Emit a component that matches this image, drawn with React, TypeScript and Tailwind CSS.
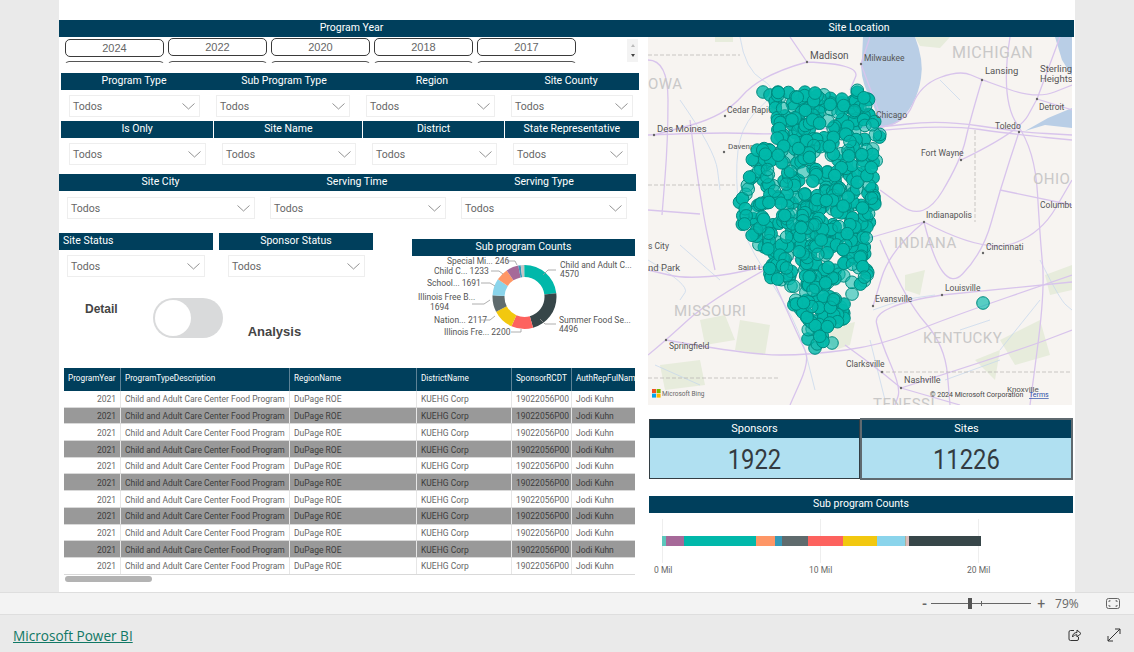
const FONT = "font-['Roboto','Liberation_Sans',sans-serif]";

function mulberry(seed: number) {
  return () => {
    seed = (seed + 0x6d2b79f5) | 0;
    let t = Math.imul(seed ^ (seed >>> 15), 1 | seed);
    t = (t + Math.imul(t ^ (t >>> 7), 61 | t)) ^ t;
    return ((t ^ (t >>> 14)) >>> 0) / 4294967296;
  };
}

const ILLINOIS: [number, number][] = [
  [764, 92], [870, 90], [872, 110], [880, 130], [880, 165], [875, 190], [875, 215], [868, 230],
  [865, 258], [869, 272], [866, 284], [855, 288], [850, 302], [847, 317], [835, 323], [832, 335],
  [815, 348], [808, 338], [808, 320], [792, 308], [773, 283], [763, 260], [752, 238], [735, 215],
  [737, 195], [748, 175], [755, 150], [768, 135], [776, 125], [775, 105],
];
const HOLES: [number, number, number][] = [
  [822, 131, 7], [840, 145, 7], [778, 171, 9], [757, 192, 9], [835, 258, 8], [852, 272, 7],
  [840, 288, 10], [785, 292, 7], [770, 212, 8], [742, 172, 8], [795, 262, 6], [858, 150, 5],
];

function inside(x: number, y: number) {
  let hit = false;
  for (let i = 0, j = ILLINOIS.length - 1; i < ILLINOIS.length; j = i++) {
    const [xi, yi] = ILLINOIS[i];
    const [xj, yj] = ILLINOIS[j];
    if (yi > y !== yj > y && x < ((xj - xi) * (y - yi)) / (yj - yi) + xi) hit = !hit;
  }
  return hit && !HOLES.some(([hx, hy, r]) => Math.hypot(x - hx, y - hy) < r);
}

function buildDots() {
  const rand = mulberry(42);
  const dots: { x: number; y: number; o: number }[] = [
    { x: 763, y: 92, o: 0.8 },
    { x: 770, y: 95, o: 0.9 },
    { x: 780, y: 97, o: 0.5 },
    { x: 815, y: 348, o: 0.8 },
    { x: 832, y: 343, o: 0.6 },
    { x: 808, y: 339, o: 0.9 },
    { x: 983, y: 303, o: 0.65 },
  ];
  while (dots.length < 640) {
    const x = 733 + rand() * 150;
    const y = 90 + rand() * 260;
    if (inside(x, y)) dots.push({ x, y, o: rand() < 0.3 ? 0.55 : 0.95 });
  }
  return dots;
}

// polylines rounded off so the roads read as curves
function smooth(d: string) {
  return d
    .split("M")
    .filter((s) => s.trim())
    .map((part) => {
      const pts = part.trim().split("L").map((p) => p.trim().split(" ").map(Number));
      let out = `M${pts[0][0]} ${pts[0][1]}`;
      for (let i = 1; i < pts.length - 1; i++) {
        const mx = (pts[i][0] + pts[i + 1][0]) / 2;
        const my = (pts[i][1] + pts[i + 1][1]) / 2;
        out += ` Q${pts[i][0]} ${pts[i][1]} ${mx} ${my}`;
      }
      const last = pts[pts.length - 1];
      return `${out} L${last[0]} ${last[1]}`;
    })
    .join(" ");
}

const ROADS = [
  "M648 135 L720 132 L780 135 L820 128 L875 128 L940 120 L1020 132 L1072 135",
  "M875 131 L940 124 L1020 135 L1072 140",
  "M807 62 L861 64 L850 90 M807 62 L790 37 M861 64 L870 37 M807 62 L760 75 L725 116 L654 135",
  "M875 128 L905 125 L920 85 L960 70 L982 80 L1037 99 L1072 85",
  "M982 80 L970 120 L961 160 L924 222 L880 190",
  "M961 160 L1019 132 L1037 99",
  "M924 222 L983 253 L1040 235 L1072 180",
  "M924 222 L942 295 L983 253 L1000 190 L1019 132",
  "M942 295 L1072 282 M942 295 L873 306 L880 340 L901 388 L895 405",
  "M924 222 L890 250 L873 306 M924 222 L768 268 L690 280 L648 270",
  "M768 268 L710 300 L666 340 L648 355 M768 268 L800 340 L810 360 L790 405",
  "M666 340 L750 355 L810 355 L882 345 L942 320 L1072 275",
  "M901 388 L882 372 L845 345 M901 388 L1020 350 L1072 330 M901 388 L960 405",
  "M861 64 L880 115 M1037 99 L1060 37 M1010 37 L1000 100 L1035 150 L1040 237 L1045 290 L1030 405",
  "M648 60 L668 60 L668 140 L662 215 M690 120 L700 200 L715 270 M648 210 L700 214",
  "M1037 99 L1072 110 M1000 190 L1072 205 M880 240 L905 300 L945 345 L950 405",
];
const RIVERS = [
  "M740 37 L745 70 L780 90 L745 120 L735 160 L740 230 L770 280 L800 330 L815 390",
  "M680 100 L715 150 L720 190 M680 245 L720 280 M873 310 L900 300 L935 295 M870 340 L885 400",
  "M960 330 L990 320 M1000 350 L1040 300 M945 380 L1000 360 M648 260 L690 285 L680 300",
  "M880 40 L900 30 M940 80 L960 100 M1040 260 L1060 300 L1072 310 M655 365 L700 385",
];
const PATCHES = [
  "M715 37 L733 37 L733 42 L715 42 Z",
  "M915 37 L950 37 L940 48 L920 46 Z",
  "M700 320 L725 315 L735 340 L705 345 Z",
  "M740 320 L770 325 L765 355 L735 350 Z",
  "M820 330 L855 322 L850 345 L835 350 Z",
  "M905 275 L925 270 L920 295 L905 290 Z",
  "M1000 340 L1040 320 L1050 355 L1015 365 Z",
  "M1045 275 L1072 265 L1072 290 L1050 295 Z",
  "M660 365 L700 360 L705 385 L665 390 Z",
  "M975 360 L1000 350 L995 380 Z",
];
const CITIES: [string, number, number, number, number, number][] = [
  ["Madison", 810, 59, 807, 62, 10],
  ["Milwaukee", 864, 61, 861, 64, 8.5],
  ["Lansing", 985, 74, 982, 80, 9.5],
  ["Cedar Rapids", 727, 113, 725, 116, 8.5],
  ["Des Moines", 657, 132, 654, 135, 9.5],
  ["Davenport", 728, 149, 724, 152, 8],
  ["Fort Wayne", 921, 156, 961, 160, 8.5],
  ["Toledo", 995, 129, 1019, 132, 8.5],
  ["Detroit", 1039, 110, 1037, 99, 8.5],
  ["Indianapolis", 926, 218, 924, 222, 8.5],
  ["Cincinnati", 986, 250, 983, 253, 8.5],
  ["Louisville", 945, 291, 942, 295, 8.5],
  ["Evansville", 875, 302, 873, 306, 8.5],
  ["Springfield", 669, 349, 666, 340, 8.5],
  ["Clarksville", 846, 367, 882, 372, 8.5],
  ["Nashville", 904, 383, 901, 388, 9],
];
const STATES: [string, number, number, number][] = [
  ["MICHIGAN", 952, 58, 16],
  ["OWA", 648, 89, 15],
  ["OHIO", 1033, 184, 15],
  ["INDIANA", 894, 248, 15],
  ["MISSOURI", 674, 316, 15],
  ["KENTUCKY", 923, 343, 15],
  ["TENESSI", 873, 409, 15],
];
const EXTRA_LABELS: [string, number, number, number][] = [
  ["Sterling", 1040, 72, 9.5],
  ["Heights", 1040, 82, 9.5],
  ["Columbus", 1040, 208, 8.5],
  ["Knoxville", 1007, 392, 8],
  ["s City", 648, 249, 8.5],
  ["nd Park", 648, 271, 9.5],
  ["Saint Louis", 738, 270, 8],
];

function SiteMap() {
  return (
    <div className="ml-[4px] h-[368px] w-[424px] overflow-hidden">
      <svg viewBox="648 37 424 368" width={424} height={368} className="block" fontFamily="Roboto, sans-serif">
        <rect x={648} y={37} width={424} height={368} fill="#f7f4f1" />
        {PATCHES.map((d) => (
          <path key={d} d={d} fill="#e7ecdc" />
        ))}
        <path d="M863 37 L915 37 Q924 60 921 78 Q917 105 898 122 Q888 128 878 127 Q878 112 868 94 Q859 75 862 58 Z" fill="#b9cee6" />
        <path d="M1055 37 L1072 37 L1072 76 L1062 60 Z" fill="#b9cee6" />
        <path d="M1025 131 L1048 118 L1072 108 L1072 128 L1045 125 Z" fill="#b9cee6" />
        {RIVERS.map((d) => (
          <path key={d} d={smooth(d)} fill="none" stroke="#c3d6ec" strokeWidth={0.7} />
        ))}
        {ROADS.map((d) => (
          <path key={d} d={smooth(d)} fill="none" stroke="#d8c4ec" strokeWidth={1.3} />
        ))}
        <path d="M648 55 L740 55 M648 185 L735 185 M975 130 L975 222 M880 372 L1072 372 M648 378 L780 378" fill="none" stroke="#b5b2b0" strokeWidth={0.7} strokeDasharray="4 2" />
        {STATES.map(([name, x, y, size]) => (
          <text key={name} x={x} y={y} fontSize={size} fill="#c9c8c8" letterSpacing={0.5}>
            {name}
          </text>
        ))}
        {CITIES.map(([name, x, y, dx, dy, size]) => (
          <g key={name}>
            <circle cx={dx} cy={dy} r={1.2} fill="#666" />
            <text x={x} y={y} fontSize={size} fill="#555">{name}</text>
          </g>
        ))}
        {EXTRA_LABELS.map(([name, x, y, size]) => (
          <text key={name} x={x} y={y} fontSize={size} fill="#555">{name}</text>
        ))}
        {buildDots().map((d, i) => (
          <circle key={i} cx={d.x} cy={d.y} r={6.3} fill="#01b8aa" fillOpacity={d.o} stroke="#008a7f" strokeWidth={1} />
        ))}
        <text x={876} y={118} fontSize={8.5} fill="#555">Chicago</text>
        <rect x={652} y={389} width={4} height={4} fill="#f25022" />
        <rect x={656.6} y={389} width={4} height={4} fill="#7fba00" />
        <rect x={652} y={393.6} width={4} height={4} fill="#00a4ef" />
        <rect x={656.6} y={393.6} width={4} height={4} fill="#ffb900" />
        <text x={662} y={396} fontSize={6.5} fill="#666">Microsoft Bing</text>
        <text x={930} y={397} fontSize={7} fill="#444">© 2024 Microsoft Corporation</text>
        <text x={1029} y={397} fontSize={7} fill="#2b4fa8" textDecoration="underline">Terms</text>
      </svg>
    </div>
  );
}

const DONUT = [
  { v: 4570, c: "#01b8aa" },
  { v: 4496, c: "#374649" },
  { v: 2200, c: "#fd625e" },
  { v: 2117, c: "#f2c80f" },
  { v: 1694, c: "#5f6b6d" },
  { v: 1691, c: "#8ad4eb" },
  { v: 1233, c: "#fe9666" },
  { v: 1233, c: "#a66999" },
  { v: 246, c: "#3599b8" },
  { v: 340, c: "#c4c4c4" },
  { v: 90, c: "#01b8aa" },
  { v: 90, c: "#f2c80f" },
];

function Donut() {
  const total = DONUT.reduce((s, d) => s + d.v, 0);
  const r = 26;
  const circ = 2 * Math.PI * r;
  let acc = 0;
  return (
    <svg viewBox="412 256 223 92" width={223} height={92} className="block">
      <g transform="rotate(-90 524.5 297)">
        {DONUT.map((d, i) => {
          const len = (d.v / total) * circ;
          const el = (
            <circle
              key={i}
              cx={524.5}
              cy={297}
              r={r}
              fill="none"
              stroke={d.c}
              strokeWidth={12}
              strokeDasharray={`${len} ${circ - len}`}
              strokeDashoffset={-acc}
            />
          );
          acc += len;
          return el;
        })}
      </g>
      <g fontFamily="Roboto, sans-serif" fontSize={8.5} fill="#555">
        <text x={560} y={268}>Child and Adult C...</text>
        <text x={560} y={277}>4570</text>
        <text x={559} y={323}>Summer Food Se...</text>
        <text x={559} y={332}>4496</text>
        <text x={444} y={335}>Illinois Fre... 2200</text>
        <text x={434} y={323}>Nation... 2117</text>
        <text x={418} y={300}>Illinois Free B...</text>
        <text x={430} y={310}>1694</text>
        <text x={427} y={286}>School... 1691</text>
        <text x={434} y={274}>Child C... 1233</text>
        <text x={447} y={264}>Special Mi... 246</text>
      </g>
      <path
        d="M511 332 L521 332 L521 329 M480 320 L490 320 L495 316 M472 304 L484 304 L490 300 M481 283 L490 283 L495 286 M491 271 L499 271 L503 274 M507 261 L515 261 L517 265 M556 270 L548 270 L543 275 M556 324 L545 324 L540 319"
        fill="none"
        stroke="#999"
        strokeWidth={0.8}
      />
    </svg>
  );
}

const BAR = [
  { w: 3.5, c: "#5cc7bc" },
  { w: 18, c: "#a66999" },
  { w: 72, c: "#01b8aa" },
  { w: 19.5, c: "#fe9666" },
  { w: 6.5, c: "#3599b8" },
  { w: 26.5, c: "#5f6b6d" },
  { w: 35, c: "#fd625e" },
  { w: 33.5, c: "#f2c80f" },
  { w: 28, c: "#8ad4eb" },
  { w: 1.5, c: "#a9b29b" },
  { w: 3, c: "#dcbcbc" },
  { w: 71.5, c: "#374649" },
];

function Title({ children, className = "" }: { children?: React.ReactNode; className?: string }) {
  return (
    <div className={`flex h-[17px] items-center justify-center overflow-hidden whitespace-nowrap bg-[#003f5c] pb-[1px] text-[10.5px] leading-none text-white ${className}`}>
      {children}
    </div>
  );
}

function Dropdown({ className = "" }: { className?: string }) {
  return (
    <div className={`flex h-[22px] items-center justify-between border border-[#eeeeee] bg-white pl-[3px] pr-[3px] text-[10.5px] text-[#666666] ${className}`}>
      <span className="mt-[1px]">Todos</span>
      <svg width={13} height={7} viewBox="0 0 13 7" className="mr-[1px]">
        <path d="M0.5 0.5 L6.5 6 L12.5 0.5" fill="none" stroke="#777" strokeWidth={0.8} />
      </svg>
    </div>
  );
}

const YEARS = ["2024", "2022", "2020", "2018", "2017"];

function YearSlicer() {
  return (
    <div className="mt-[1px] flex h-[25px] overflow-hidden pl-[6px]">
      <div className="w-[515px]">
        <div className="flex gap-[4px]">
          {YEARS.map((y, i) => (
            <div
              key={y}
              className={`flex h-[18px] w-[99px] items-center justify-center rounded-[5px] border border-[#3a3a3a] text-[11px] text-[#666666] font-['Liberation_Sans',sans-serif] ${i === 0 ? "mt-[1px]" : ""}`}
            >
              {y}
            </div>
          ))}
        </div>
        <div className="mt-[4px] flex gap-[4px]">
          {YEARS.map((y) => (
            <div key={y} className="h-[8px] w-[99px] rounded-[5px] border border-[#555555]" />
          ))}
        </div>
      </div>
      <div className="ml-[47px] mt-[1px] flex h-[23px] w-[11px] flex-col items-center justify-between bg-[#f3f3f3] py-[5px]">
        <div className="h-0 w-0 border-x-[2.5px] border-b-[3px] border-x-transparent border-b-[#bbbbbb]" />
        <div className="h-0 w-0 border-x-[2.5px] border-t-[3px] border-x-transparent border-t-[#444444]" />
      </div>
    </div>
  );
}

const COLS = ["w-[57px]", "w-[169px]", "w-[127px]", "w-[95px]", "w-[60px]", "w-[63px]"];
const HEADS = ["ProgramYear", "ProgramTypeDescription", "RegionName", "DistrictName", "SponsorRCDT", "AuthRepFulName"];
const CELLS = ["2021", "Child and Adult Care Center Food Program", "DuPage ROE", "KUEHG Corp", "19022056P00", "Jodi Kuhn"];

function DataTable() {
  return (
    <div className="ml-[5px] w-[571px] overflow-hidden">
      <div className="flex h-[23px] bg-[#003f5c] text-[8.2px] text-white">
        {HEADS.map((h, i) => (
          <div key={h} className={`${COLS[i]} flex shrink-0 items-center overflow-hidden whitespace-nowrap border-r border-[#5d8296] pb-[3px] pl-[4px] last:border-r-0`}>
            {h}
          </div>
        ))}
      </div>
      {Array.from({ length: 11 }, (_, r) => (
        <div
          key={r}
          className={`flex h-[16.7px] border-b border-[#d9d9d9] text-[8.5px] ${r % 2 ? "bg-[#999999] text-[#3c3c3c]" : "bg-white text-[#666666]"}`}
        >
          {CELLS.map((c, i) => (
            <div
              key={i}
              className={`${COLS[i]} flex shrink-0 items-center overflow-hidden whitespace-nowrap border-r border-[#e6e6e6] pl-[4px] pt-[2px] last:border-r-0 ${i === 0 ? "justify-end pr-[4px]" : ""}`}
            >
              {c}
            </div>
          ))}
        </div>
      ))}
      <div className="ml-[1px] mt-[1px] h-[6px] w-[87px] rounded-full bg-[#b3b3b3]" />
    </div>
  );
}

function Kpi({ title, value, outer }: { title: string; value: string; outer: string }) {
  return (
    <div className={`flex flex-col ${outer}`}>
      <div className="flex h-[18px] items-center justify-center bg-[#003f5c] text-[11px] text-white">{title}</div>
      <div className="flex flex-1 items-center justify-center bg-[#b0e0f1] pt-[3px] text-[28px] leading-none text-[#333a40]">
        <span className="scale-x-[0.85]">{value}</span>
      </div>
    </div>
  );
}

function Footer() {
  return (
    <>
      <div className="flex h-[23px] items-center border-y border-[#dedede] bg-[#f3f3f3] text-[#666666]">
        <span className="ml-[922px] text-[14px] font-semibold leading-none">-</span>
        <div className="relative ml-[4px] h-[1px] w-[100px] bg-[#666666]">
          <div className="absolute left-[37px] top-[-5px] h-[11px] w-[4px] bg-[#555555]" />
          <div className="absolute left-[50px] top-[-2px] h-[5px] w-[1px] bg-[#666666]" />
        </div>
        <span className="ml-[6px] text-[14px] leading-none">+</span>
        <span className="ml-[10px] w-[24px] text-[12px] font-['Open_Sans',sans-serif] leading-none">79%</span>
        <svg width={14} height={11} viewBox="0 0 14 11" className="ml-[27px]" fill="none" stroke="#555" strokeWidth={0.9}>
          <rect x={0.5} y={0.5} width={13} height={10} rx={2} />
          <path d="M3 4 V2.8 H4.5 M9.5 2.8 H11 V4 M3 7 V8.2 H4.5 M9.5 8.2 H11 V7" />
        </svg>
      </div>
      <div className="flex h-[37px] items-center bg-[#eaeaea] pl-[13px] pt-[5px]">
        <span className="w-[120px] whitespace-nowrap text-[13.6px] text-[#117865] underline font-['Open_Sans',sans-serif]">Microsoft Power BI</span>
        <svg width={14} height={14} viewBox="0 0 14 14" className="ml-[935px] mb-[3px]" fill="none" stroke="#333" strokeWidth={1}>
          <path d="M6 2.5 H2.5 A1.5 1.5 0 0 0 1 4 V11 A1.5 1.5 0 0 0 2.5 12.5 H9 A1.5 1.5 0 0 0 10.5 11 V9" />
          <path d="M4.5 9 C4.5 6 6.5 4.5 9 4.5 V2 L13 5.5 L9 9 V6.8 C7 6.8 5.5 7.5 4.5 9 Z" />
        </svg>
        <svg width={14} height={14} viewBox="0 0 14 14" className="ml-[25px] mb-[3px]" fill="none" stroke="#333" strokeWidth={1}>
          <path d="M1 13 L13 1 M8 1 H13 V6 M1 8 V13 H6" />
        </svg>
      </div>
    </>
  );
}

export default function App() {
  const bar1 = ["w-[146px]", "w-[154px]", "w-[142px]", "w-[136px]"];
  const bar2 = ["w-[153px]", "w-[149px]", "w-[141px]", "w-[135px]"];
  return (
    <div className={`flex h-[652px] w-[1134px] flex-col overflow-hidden bg-[#eaeaea] ${FONT}`}>
      <div className="flex h-[592px] pl-[59px]">
        <div className="flex h-full w-[1016px] bg-white pt-[20px]">
          <div className="w-[585px] shrink-0">
            <Title>Program Year</Title>
            <YearSlicer />

            <div className="ml-[2px] mt-[10px] flex w-[578px]">
              {["Program Type", "Sub Program Type", "Region", "Site County"].map((t, i) => (
                <Title key={t} className={bar1[i]}>{t}</Title>
              ))}
            </div>
            <div className="ml-[10px] mt-[5px] flex gap-[16px]">
              <Dropdown className="w-[131px]" />
              <Dropdown className="w-[134px]" />
              <Dropdown className="w-[129px]" />
              <Dropdown className="w-[122px]" />
            </div>

            <div className="ml-[2px] mt-[4px] flex w-[578px] gap-[1px]">
              {["Is Only", "Site Name", "District", "State Representative"].map((t, i) => (
                <Title key={t} className={bar2[i]}>{t}</Title>
              ))}
            </div>
            <div className="ml-[10px] mt-[5px] flex gap-[16px]">
              <Dropdown className="w-[137px]" />
              <Dropdown className="w-[134px]" />
              <Dropdown className="w-[125px]" />
              <Dropdown className="w-[115px]" />
            </div>

            <div className="mt-[9px] flex w-[577px]">
              <Title className="w-[203px]">Site City</Title>
              <Title className="w-[190px]">Serving Time</Title>
              <Title className="w-[184px]">Serving Type</Title>
            </div>
            <div className="ml-[8px] mt-[6px] flex gap-[15px]">
              <Dropdown className="w-[188px]" />
              <Dropdown className="w-[176px]" />
              <Dropdown className="w-[166px]" />
            </div>

            <div className="mt-[14px] flex h-[135px]">
              <div className="w-[353px] shrink-0">
                <div className="flex gap-[6px]">
                  <Title className="w-[154px] !justify-start pl-[4px]">Site Status</Title>
                  <Title className="w-[154px]">Sponsor Status</Title>
                </div>
                <div className="ml-[8px] mt-[5px] flex gap-[23px]">
                  <Dropdown className="w-[138px]" />
                  <Dropdown className="w-[137px]" />
                </div>
                <div className="mt-[21px] flex items-start font-['Liberation_Sans',sans-serif] font-bold text-[#444444]">
                  <span className="ml-[26px] mt-[2px] text-[12px]">Detail</span>
                  <div className="ml-[35px] flex h-[40px] w-[70px] items-center rounded-full bg-[#d9dadb] pl-[2px]">
                    <div className="h-[36px] w-[36px] rounded-full bg-white" />
                  </div>
                  <span className="ml-[25px] mt-[26px] text-[13px] leading-[16px]">Analysis</span>
                </div>
              </div>
              <div className="mt-[6px] w-[223px]">
                <Title className="text-[10.2px]">Sub program Counts</Title>
                <Donut />
              </div>
            </div>

            <DataTable />
          </div>

          <div className="w-[431px]">
            <Title className="w-[430px]">Site Location</Title>
            <SiteMap />
            <div className="ml-[5px] mt-[13px] flex items-start">
              <Kpi title="Sponsors" value="1922" outer="mt-[1px] h-[60px] w-[211px] border-[1.5px] border-[#333e44]" />
              <Kpi title="Sites" value="11226" outer="h-[62px] w-[213px] border-2 border-[#5f6a70]" />
            </div>
            <Title className="ml-[5px] mt-[16px] w-[424px] text-[8.7px]">Sub program Counts</Title>
            <div className="relative ml-[5px] h-[68px] w-[424px]">
              <div className="absolute left-[13px] top-[6px] h-[44px] w-[1px] bg-[#eeeeee]" />
              <div className="absolute left-[171px] top-[6px] h-[44px] w-[1px] bg-[#eeeeee]" />
              <div className="absolute left-[329px] top-[6px] h-[44px] w-[1px] bg-[#eeeeee]" />
              <div className="absolute left-[13px] top-[23px] flex h-[10px]">
                {BAR.map((s, i) => (
                  <div key={i} style={{ width: s.w, backgroundColor: s.c }} />
                ))}
              </div>
              <span className="absolute left-[5px] top-[51px] text-[8.5px] text-[#666666]">0 Mil</span>
              <span className="absolute left-[160px] top-[51px] text-[8.5px] text-[#666666]">10 Mil</span>
              <span className="absolute left-[318px] top-[51px] text-[8.5px] text-[#666666]">20 Mil</span>
            </div>
          </div>
        </div>
      </div>
      <Footer />
    </div>
  );
}
